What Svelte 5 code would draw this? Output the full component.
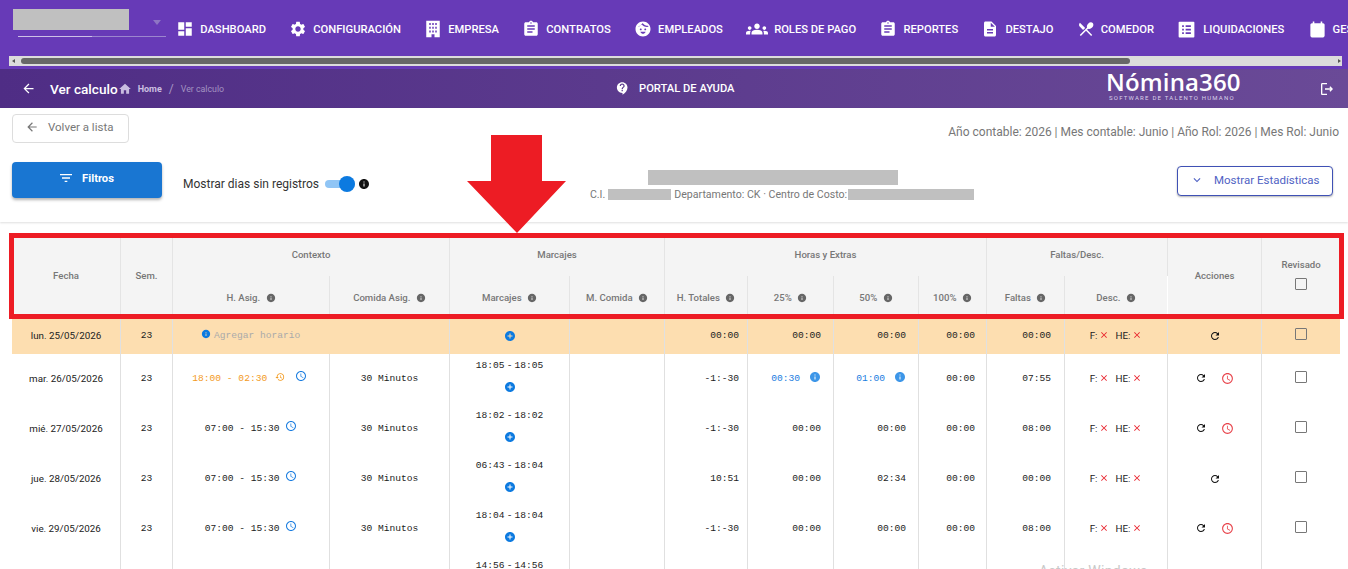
<script lang="ts">
  const d = {
    dashboard: "M3 13h8V3H3v10zm0 8h8v-6H3v6zm10 0h8V11h-8v10zm0-18v6h8V3h-8z",
    settings: "M19.14 12.94c.04-.3.06-.61.06-.94 0-.32-.02-.64-.07-.94l2.03-1.58c.18-.14.23-.41.12-.61l-1.92-3.32c-.12-.22-.37-.29-.59-.22l-2.39.96c-.5-.38-1.03-.7-1.62-.94l-.36-2.54c-.04-.24-.24-.41-.48-.41h-3.84c-.24 0-.43.17-.47.41l-.36 2.54c-.59.24-1.13.57-1.62.94l-2.39-.96c-.22-.08-.47 0-.59.22L2.74 8.87c-.12.21-.08.47.12.61l2.03 1.58c-.05.3-.09.63-.09.94s.02.64.07.94l-2.03 1.58c-.18.14-.23.41-.12.61l1.92 3.32c.12.22.37.29.59.22l2.39-.96c.5.38 1.03.7 1.62.94l.36 2.54c.05.24.24.41.48.41h3.84c.24 0 .44-.17.47-.41l.36-2.54c.59-.24 1.13-.56 1.62-.94l2.39.96c.22.08.47 0 .59-.22l1.92-3.32c.12-.22.07-.47-.12-.61l-2.01-1.58zM12 15.6c-1.98 0-3.6-1.62-3.6-3.6s1.62-3.6 3.6-3.6 3.6 1.62 3.6 3.6-1.62 3.6-3.6 3.6z",
    building: "M3 1h18v22h-7v-4h-4v4H3V1zm4 3v2.5h2V4H7zm4 0v2.5h2V4h-2zm4 0v2.5h2V4h-2zM7 9v2.5h2V9H7zm4 0v2.5h2V9h-2zm4 0v2.5h2V9h-2zM7 14v2.5h2V14H7zm4 0v2.5h2V14h-2zm4 0v2.5h2V14h-2z",
    assignment: "M19 3h-4.18C14.4 1.84 13.3 1 12 1c-1.3 0-2.4.84-2.82 2H5c-1.1 0-2 .9-2 2v14c0 1.1.9 2 2 2h14c1.1 0 2-.9 2-2V5c0-1.1-.9-2-2-2zm-7 0c.55 0 1 .45 1 1s-.45 1-1 1-1-.45-1-1 .45-1 1-1zm2 14H7v-2h7v2zm3-4H7v-2h10v2zm0-4H7V7h10v2z",
    face: "M12 2C6.48 2 2 6.48 2 12s4.48 10 10 10 10-4.48 10-10S17.52 2 12 2zM9 13.75c-.69 0-1.25-.56-1.25-1.25s.56-1.25 1.25-1.25 1.25.56 1.25 1.25-.56 1.25-1.25 1.25zm6 0c-.69 0-1.25-.56-1.25-1.25s.56-1.25 1.25-1.25 1.25.56 1.25 1.25-.56 1.25-1.25 1.25zM8.5 15.5h7c-.8 1.8-2.1 2.8-3.5 2.8s-2.7-1-3.5-2.8zM4.6 9.5C7 9 9 7.5 10 5.2c1.6 2.4 4.6 4.1 7.6 4 .6 0 1.2-.1 1.8-.2-.2-.5-.5-1-.8-1.5-1.4.3-3 .1-4.4-.7-1.2-.7-2.1-1.6-2.7-2.7-.7 1.6-3.2 3.9-5.4 4.4-.5.3-1.2 1.4-1.5 1z",
    groups: "M12 12.75c1.63 0 3.07.39 4.24.9 1.08.48 1.76 1.56 1.76 2.73V18H6v-1.61c0-1.18.68-2.26 1.76-2.73 1.17-.52 2.61-.91 4.24-.91zM4 13c1.1 0 2-.9 2-2s-.9-2-2-2-2 .9-2 2 .9 2 2 2zm1.13 1.1c-.37-.06-.74-.1-1.13-.1-.99 0-1.93.21-2.78.58C.48 14.9 0 15.62 0 16.43V18h4.5v-1.61c0-.83.23-1.61.63-2.29zM20 13c1.1 0 2-.9 2-2s-.9-2-2-2-2 .9-2 2 .9 2 2 2zm4 3.43c0-.81-.48-1.53-1.22-1.85-.85-.37-1.79-.58-2.78-.58-.39 0-.76.04-1.13.1.4.68.63 1.46.63 2.29V18H24v-1.57zM12 6c1.66 0 3 1.34 3 3s-1.34 3-3 3-3-1.34-3-3 1.34-3 3-3z",
    doc: "M14 2H6c-1.1 0-1.99.9-1.99 2L4 20c0 1.1.89 2 1.99 2H18c1.1 0 2-.9 2-2V8l-6-6zm2 16H8v-2h8v2zm0-4H8v-2h8v2zm-3-5V3.5L18.5 9H13z",
    food: "M8.1 13.34l2.83-2.83L3.91 3.5c-1.56 1.56-1.56 4.09 0 5.66l4.19 4.18zm6.78-1.81c1.53.71 3.68.21 5.27-1.38 1.91-1.91 2.28-4.65.81-6.12-1.46-1.46-4.2-1.1-6.12.81-1.59 1.59-2.09 3.74-1.38 5.27L3.7 19.87l1.41 1.41L12 14.41l6.88 6.88 1.41-1.41L13.41 13l1.47-1.47z",
    list: "M4 3h16a1 1 0 011 1v16a1 1 0 01-1 1H4a1 1 0 01-1-1V4a1 1 0 011-1zm7 4v2h6V7h-6zm0 4v2h6v-2h-6zm0 4v2h6v-2h-6zM7 7v2h2V7H7zm0 4v2h2v-2H7zm0 4v2h2v-2H7z",
    calendar: "M19 4h-1V2h-2v2H8V2H6v2H5c-1.1 0-2 .9-2 2v14c0 1.1.9 2 2 2h14c1.1 0 2-.9 2-2V6c0-1.1-.9-2-2-2z",
    help: "M11.5 2C6.81 2 3 5.81 3 10.5S6.81 19 11.5 19h.5v3c4.86-2.34 8-7 8-11.5C20 5.81 16.19 2 11.5 2zm1 14.5h-2v-2h2v2zm0-3.5h-2c0-3.25 3-3 3-5 0-1.1-.9-2-2-2s-2 .9-2 2h-2c0-2.21 1.79-4 4-4s4 1.79 4 4c0 2.5-3 2.75-3 5z",
    logout: "M17 8l-1.41 1.41L17.17 11H9v2h8.17l-1.58 1.58L17 16l4-4-4-4zM5 5h7V3H5c-1.1 0-2 .9-2 2v14c0 1.1.9 2 2 2h7v-2H5V5z",
    home: "M10 20v-6h4v6h5v-8h3L12 3 2 12h3v8z",
    back: "M20 11H7.83l5.59-5.59L12 4l-8 8 8 8 1.41-1.41L7.83 13H20v-2z",
    filter: "M10 18h4v-2h-4v2zM3 6v2h18V6H3zm3 7h12v-2H6v2z",
    more: "M16.59 8.59L12 13.17 7.41 8.59 6 10l6 6 6-6z",
    info: "M12 2C6.48 2 2 6.48 2 12s4.48 10 10 10 10-4.48 10-10S17.52 2 12 2zm1 15h-2v-6h2v6zm0-8h-2V7h2v2z",
    add: "M12 2C6.48 2 2 6.48 2 12s4.48 10 10 10 10-4.48 10-10S17.52 2 12 2zm5 11h-4v4h-2v-4H7v-2h4V7h2v4h4v2z",
    clock: "M11.99 2C6.47 2 2 6.48 2 12s4.47 10 9.99 10C17.52 22 22 17.52 22 12S17.52 2 11.99 2zM12 20c-4.42 0-8-3.58-8-8s3.58-8 8-8 8 3.58 8 8-3.58 8-8 8zm.5-13H11v6l5.25 3.15.75-1.23-4.5-2.67z",
    refresh: "M17.65 6.35C16.2 4.9 14.21 4 12 4c-4.42 0-7.99 3.58-7.99 8s3.57 8 7.99 8c3.73 0 6.84-2.55 7.73-6h-2.08c-.82 2.33-3.04 4-5.65 4-3.31 0-6-2.69-6-6s2.69-6 6-6c1.66 0 3.14.69 4.22 1.78L13 11h7V4l-2.35 2.35z",
    history: "M13 3c-4.97 0-9 4.03-9 9H1l3.89 3.89.07.14L9 12H6c0-3.87 3.13-7 7-7s7 3.13 7 7-3.13 7-7 7c-1.93 0-3.68-.79-4.94-2.06l-1.42 1.42C8.27 19.99 10.51 21 13 21c4.97 0 9-4.03 9-9s-4.03-9-9-9zm-1 5v5l4.28 2.54.72-1.21-3.5-2.08V8H12z",
    close: "M19 6.41L17.59 5 12 10.59 6.41 5 5 6.41 10.59 12 5 17.59 6.41 19 12 13.41 17.59 19 19 17.59 13.41 12z"
  };

  const menu = [
    ["dashboard", "Dashboard"], ["settings", "Configuración"], ["building", "Empresa"],
    ["assignment", "Contratos"], ["face", "Empleados"], ["groups", "Roles de pago"],
    ["assignment", "Reportes"], ["doc", "Destajo"], ["food", "Comedor"],
    ["list", "Liquidaciones"], ["calendar", "Gestión"]
  ];

  const rows = [
    { date: "mar. 26/05/2026", night: true, range: "18:00 - 02:30", mark: ["18:05", "18:05"], tot: "-1:-30", p25: "00:30", p50: "01:00", p100: "00:00", falt: "07:55", late: true },
    { date: "mié. 27/05/2026", range: "07:00 - 15:30", mark: ["18:02", "18:02"], tot: "-1:-30", p25: "00:00", p50: "00:00", p100: "00:00", falt: "08:00", late: true },
    { date: "jue. 28/05/2026", range: "07:00 - 15:30", mark: ["06:43", "18:04"], tot: "10:51", p25: "00:00", p50: "02:34", p100: "00:00", falt: "00:00", late: false },
    { date: "vie. 29/05/2026", range: "07:00 - 15:30", mark: ["18:04", "18:04"], tot: "-1:-30", p25: "00:00", p50: "00:00", p100: "00:00", falt: "08:00", late: true }
  ];

  const sub = ["H. Asig.", "Comida Asig.", "Marcajes", "M. Comida", "H. Totales", "25%", "50%", "100%", "Faltas", "Desc."];
</script>

{#snippet icon(name, cls = "")}
  <svg class={cls} viewBox="0 0 24 24" fill="currentColor" fill-rule="evenodd" aria-hidden="true"><path d={d[name]} /></svg>
{/snippet}

{#snippet desc()}
  <span class="desc">F:{@render icon("close", "x")}<i></i>HE:{@render icon("close", "x")}</span>
{/snippet}

{#snippet check()}
  <span class="check"></span>
{/snippet}

<div class="page">
  <nav class="nav">
    <div class="select">
      <div class="blur sel"></div>
      <span class="caret"></span>
      <div class="line"></div>
    </div>
    {#each menu as [ic, label]}
      <a class="item">{@render icon(ic, ic)}<span>{label}</span></a>
    {/each}
  </nav>
  <div class="navscroll">
    <div class="scroll">
      <span class="tri l"></span>
      <div class="thumb"></div>
      <span class="tri r"></span>
    </div>
  </div>

  <header class="bar">
    <div class="crumbs">
      {@render icon("back", "bk")}
      <b>Ver calculo</b>
      {@render icon("home", "hm")}
      <span class="h">Home</span>
      <span class="sl">/</span>
      <span class="cur">Ver calculo</span>
    </div>
    <div class="portal">{@render icon("help")}<span>PORTAL DE AYUDA</span></div>
    <div class="logo">
      <div class="brand">Nómina360</div>
      <div class="tag">SOFTWARE DE TALENTO HUMANO</div>
    </div>
    {@render icon("logout", "out")}
  </header>

  <section class="panel">
    <div class="r1">
      <button class="ghost">{@render icon("back")}<span>Volver a lista</span></button>
      <div class="period">Año contable: 2026 | Mes contable: Junio | Año Rol: 2026 | Mes Rol: Junio</div>
    </div>
    <div class="r2">
      <div class="left">
        <button class="filtros">{@render icon("filter")}<span>Filtros</span></button>
        <span class="lbl">Mostrar dias sin registros</span>
        <span class="toggle"><span></span></span>
        {@render icon("info", "tinfo")}
      </div>
      <div class="emp">
        <div class="blur name"></div>
        <div class="meta">
          <span>C.I.</span><span class="blur ci"></span><span>Departamento: CK · Centro de Costo:</span><span class="blur cc"></span>
        </div>
      </div>
      <button class="stats">{@render icon("more")}<span>Mostrar Estadísticas</span></button>
    </div>
  </section>

  <table>
    <colgroup>
      {#each [109, 52, 157, 120, 120, 95, 83, 86, 85, 68, 78, 103, 94, 78] as w}
        <col style="width:{w}px" />
      {/each}
    </colgroup>
    <thead>
      <tr>
        <th rowspan="2" class="rs">Fecha</th>
        <th rowspan="2" class="rs">Sem.</th>
        <th colspan="2">Contexto</th>
        <th colspan="2">Marcajes</th>
        <th colspan="4">Horas y Extras</th>
        <th colspan="2">Faltas/Desc.</th>
        <th rowspan="2" class="rs">Acciones</th>
        <th rowspan="2"><div class="rev">Revisado{@render check()}</div></th>
      </tr>
      <tr class="sub">
        {#each sub as label}
          <th>{label} {@render icon("info", "hinfo")}</th>
        {/each}
      </tr>
    </thead>
    <tbody>
      <tr class="warn">
        <td class="date">lun. 25/05/2026</td>
        <td class="m c">23</td>
        <td colspan="2" class="m add">{@render icon("info", "ainfo")}<span>Agregar horario</span></td>
        <td class="c">{@render icon("add", "plus")}</td>
        <td></td>
        <td class="m tot">00:00</td>
        <td class="m p25">00:00</td>
        <td class="m p50">00:00</td>
        <td class="m p100">00:00</td>
        <td class="m falt">00:00</td>
        <td class="c">{@render desc()}</td>
        <td class="c">{@render icon("refresh", "ref")}</td>
        <td class="c">{@render check()}</td>
      </tr>
      {#each rows as r}
        <tr>
          <td class="date">{r.date}</td>
          <td class="m c">23</td>
          <td class="m c" class:night={r.night}>
            {r.range}
            {#if r.night}{@render icon("history", "hist")}{/if}
            {@render icon("clock", "blue")}
          </td>
          <td class="m c">30 Minutos</td>
          <td class="m mark">
            <div>{r.mark[0]}<em>-</em>{r.mark[1]}</div>
            {@render icon("add", "plus")}
          </td>
          <td></td>
          <td class="m tot">{r.tot}</td>
          <td class="m p25" class:link={r.night}>{r.p25}{#if r.night}{@render icon("info", "linfo")}{/if}</td>
          <td class="m p50" class:link={r.night}>{r.p50}{#if r.night}{@render icon("info", "linfo")}{/if}</td>
          <td class="m p100">{r.p100}</td>
          <td class="m falt">{r.falt}</td>
          <td class="c">{@render desc()}</td>
          <td class="c">
            {@render icon("refresh", "ref")}
            {#if r.late}{@render icon("clock", "red")}{/if}
          </td>
          <td class="c">{@render check()}</td>
        </tr>
      {/each}
      <tr>
        <td></td><td></td><td></td><td></td>
        <td class="m mark"><div>14:56<em>-</em>14:56</div></td>
        <td></td><td></td><td></td><td></td><td></td><td></td><td></td><td></td><td></td>
      </tr>
    </tbody>
  </table>

  <div class="frame"></div>
  <svg class="arrow" viewBox="0 0 99 98" aria-hidden="true">
    <polygon points="24,0 75,0 75,46 99,46 50,98 0,46 24,46" fill="#ed1c24" />
  </svg>
  <div class="wm">Activar Windows</div>
</div>

<style>
  :global(body) { margin: 0; background: #fff; font-family: Roboto, "Liberation Sans", sans-serif; }
  .page { position: relative; height: 569px; overflow: hidden; }
  svg { display: inline-block; vertical-align: middle; }
  .blur { background: #c0c0c0; display: block; }

  .nav {
    height: 56px; background: #673ab7; display: flex; align-items: center; gap: 23.25px;
    padding-top: 2px; box-sizing: border-box; white-space: nowrap; overflow: hidden; color: #fff;
  }
  .select { position: relative; flex: none; width: 153px; height: 56px; margin-top: -2px; }
  .sel { position: absolute; left: 13px; top: 9px; width: 116px; height: 21px; }
  .caret {
    position: absolute; left: 153px; top: 20px; border: 4.5px solid transparent;
    border-top: 5px solid #8e75c4; border-bottom: 0;
  }
  .line {
    position: absolute; left: 18px; top: 36px; width: 148px; height: 1px;
    background: linear-gradient(90deg, #cdc0e6 50%, #9c86ce 50%);
  }
  .item {
    display: flex; align-items: center; gap: 6px; flex: none;
    font-size: 11.2px; font-weight: 500; text-transform: uppercase;
  }
  .item svg { width: 18px; height: 18px; }
  .item svg.groups { width: 22px; height: 22px; }
  .item svg.list { width: 21px; height: 21px; margin-left: -1px; }
  .item svg.calendar { width: 19px; height: 19px; }

  .navscroll { background: #673ab7; height: 13px; padding-left: 9px; padding-right: 6px; }
  .scroll {
    height: 10px; background: #dcdcdc; display: flex; align-items: center; position: relative;
    padding-left: 12px;
  }
  .thumb { width: 1109px; height: 6px; background: #676767; border-radius: 3px; }
  .tri { position: absolute; top: 2.5px; border: 2.5px solid transparent; }
  .tri.l { left: 3px; border-right: 3px solid #555; border-left: 0; }
  .tri.r { right: 1px; border-left: 3px solid #555; border-right: 0; }

  .bar {
    height: 39px; display: flex; align-items: center; color: #fff;
    background: linear-gradient(90deg, #4f2d85, #6a4a97);
  }
  .crumbs { width: 614px; flex: none; display: flex; align-items: center; padding-left: 21px; box-sizing: border-box; }
  .bk { width: 15px; height: 15px; margin-right: 14px; }
  .crumbs b { font-size: 13.6px; font-weight: 500; }
  .hm { width: 14px; height: 14px; color: #c9bce0; margin: 0 6px 0 0; }
  .h { font-size: 9px; font-weight: 700; color: #cbbfe0; }
  .sl { font-size: 12px; color: #a796c6; margin: 0 7px; }
  .cur { font-size: 8.8px; color: #a393c2; }
  .portal { width: 490px; flex: none; display: flex; align-items: center; gap: 9px; padding-left: 1px; box-sizing: border-box; }
  .portal svg { width: 15px; height: 15px; }
  .portal span { font-size: 11.2px; font-weight: 500; }
  .logo { width: 213px; flex: none; text-align: left; margin-left: 2px; margin-top: -5px; }
  .brand { font: 600 24px/21px "Open Sans", sans-serif; letter-spacing: .15px; }
  .tag { font-size: 6px; line-height: 7px; letter-spacing: 1.22px; color: #d9d0e8; margin: 2px 0 0 3px; }
  .out { width: 16px; height: 16px; }

  .panel { height: 114px; box-shadow: 0 1px 2px rgba(0, 0, 0, .13); padding: 6px 15px 0 12px; box-sizing: border-box; }
  .r1 { display: flex; justify-content: space-between; align-items: flex-start; }
  button { font-family: inherit; cursor: pointer; display: flex; align-items: center; box-sizing: border-box; }
  .ghost {
    width: 117px; height: 29px; border: 1px solid #ddd; border-radius: 4px; background: #fff; color: #777;
    font-size: 11.5px; gap: 9px; padding: 0 0 4px 12px;
  }
  .ghost svg { width: 14px; height: 14px; }
  .period { font-size: 12px; color: #777; margin: 11px -6px 0 0; }
  .r2 { display: grid; grid-template-columns: 570px 400px 1fr; margin-top: 19px; }
  .left { display: flex; align-items: center; height: 36px; }
  .filtros {
    width: 150px; height: 36px; background: #1976d2; border: 0; border-radius: 4px; color: #fff; justify-content: center;
    gap: 8px; font-size: 11.2px; font-weight: 700; box-shadow: 0 2px 3px rgba(0, 0, 0, .3); padding: 0 2px 4px 0;
  }
  .filtros svg { width: 16px; height: 16px; }
  .lbl { font-size: 12px; color: #333; margin-left: 21px; padding-top: 8px; }
  .toggle { position: relative; display: block; width: 30px; height: 8px; background: #90c5f5; border-radius: 4px; margin: 8px 0 0 6px; }
  .toggle span { position: absolute; right: 0; top: -4px; width: 16px; height: 16px; border-radius: 50%; background: #0c7ae0; }
  .tinfo { width: 12px; height: 12px; color: #111; margin: 8px 0 0 3px; }
  .emp { display: flex; flex-direction: column; align-items: center; padding-top: 8px; }
  .name { width: 250px; height: 15px; margin-left: -18px; }
  .meta { display: flex; align-items: center; font-size: 10.6px; color: #777; margin-top: 4px; height: 11px; white-space: nowrap; }
  .ci { width: 63px; height: 11px; margin: 0 3px 0 3px; }
  .cc { width: 126px; height: 11px; margin-left: 1px; }
  .stats {
    width: 156px; height: 30px; margin: 4px 0 0 auto; background: #fff; border: 1px solid #3f51b5; border-radius: 4px;
    color: #5062c4; font-size: 11.5px; gap: 10px; padding: 0 0 2px 12px; box-shadow: 0 1px 2px rgba(0, 0, 0, .3);
  }
  .stats svg { width: 14px; height: 14px; }

  table {
    width: 1328px; margin: 11px 0 0 12px; table-layout: fixed; border-collapse: separate; border-spacing: 0;
    font-size: 11px; color: #222;
  }
  th {
    height: 43px; padding: 0; background: #f4f4f4; color: #777; font-size: 9.6px; font-weight: 500;
    border-right: 1px solid #e4e4e4; box-sizing: border-box; white-space: nowrap;
  }
  th:last-child { border-right: 0; }
  th.rs { padding-bottom: 2px; }
  .sub th:last-child { border-right: 1px solid #fff; }
  .hinfo { width: 10px; height: 10px; color: #666; margin-left: 3px; }
  .rev { display: flex; flex-direction: column; align-items: center; gap: 8px; padding-bottom: 3px; }
  .check { display: inline-block; width: 12px; height: 12px; box-sizing: border-box; border: 1.5px solid #777; border-radius: 1px; vertical-align: middle; }
  td .check { margin-bottom: 2px; }
  td { height: 50px; padding: 0 0 2px; border-right: 1px solid #e0e0e0; box-sizing: border-box; white-space: nowrap; }
  td:last-child { border-right: 0; }
  .warn td { height: 35px; background: #fddeb0; padding-bottom: 3px; }
  .date { text-align: center; font-size: 9.8px; }
  .m { font-family: "Liberation Mono", monospace; font-size: 9.6px; color: #222; }
  .c { text-align: center; }
  .add { padding-left: 28px; color: #aaa; }
  .ainfo { width: 10px; height: 10px; color: #0c7ae0; margin: -2px 3px 0 0; }
  .plus { width: 12px; height: 12px; color: #0c7ae0; }
  .mark { text-align: center; vertical-align: top; padding-top: 6px; }
  .mark div { line-height: 12px; margin-bottom: 9px; }
  .mark em { font-style: normal; margin: 0 2px; }
  .tot, .p25, .p50, .p100, .falt { text-align: right; }
  .tot { padding-right: 8px; }
  .p25, .p50 { padding-right: 12px; }
  .p100 { padding-right: 11px; }
  .falt { padding-right: 13px; }
  .link { color: #1a7de0; }
  .linfo { width: 12px; height: 12px; color: #3d96e8; margin-left: 9px; margin-top: -2px; }
  td.night { color: #f39a1e; padding-right: 3px; }
  .hist { width: 10px; height: 10px; color: #f39a1e; margin: -2px 4px 0 2px; }
  .blue { width: 12px; height: 12px; color: #1a7de0; margin-top: -3px; }
  .desc { font-size: 9.8px; }
  .desc i { display: inline-block; width: 6px; }
  .x { width: 10px; height: 10px; color: #e8212b; margin: -2px 0 0 2px; }
  .ref { width: 12px; height: 12px; color: #111; }
  .red { width: 13px; height: 13px; color: #e8434b; margin-left: 11px; }

  .frame { position: absolute; left: 9px; top: 233px; width: 1335px; height: 86px; box-sizing: border-box; border: 5px solid #ed1c24; pointer-events: none; }
  .arrow { position: absolute; left: 467px; top: 135px; width: 99px; height: 98px; }
  .wm { position: absolute; left: 1039px; top: 563px; font-size: 14px; color: #c9c9c9; letter-spacing: .3px; }
</style>
